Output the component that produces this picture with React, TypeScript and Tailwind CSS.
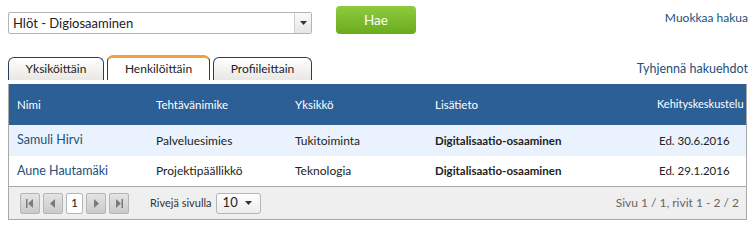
import React from "react";

const font = { fontFamily: 'Lato, "Liberation Sans", sans-serif' };

function TriDown() {
  return (
    <svg width="7" height="4" viewBox="0 0 7 4">
      <path d="M0 0h7L3.5 4z" fill="#333" />
    </svg>
  );
}

function PagerBtn({ children }: { children: React.ReactNode }) {
  return (
    <div className="w-[20px] h-[21px] flex items-center justify-center rounded-[2px] border border-[#b5b5b5] bg-gradient-to-b from-[#e4e4e4] to-[#c9c9c9]">
      {children}
    </div>
  );
}

const cols = "grid grid-cols-[139px_139px_140px_222px_1fr] items-center";

export default function App() {
  return (
    <div className="w-[755px] h-[228px] bg-white text-[#222]" style={font}>
      <div className="flex items-start pl-2 pr-[7px] pt-[6px] h-[50px]">
        <div className="mt-[6px] w-[304px] h-[22px] border border-[#b3b3b3] rounded-[2px] flex bg-white">
          <div className="flex-1 text-[13px] leading-[20px] pl-[4px]">Hlöt - Digiosaaminen</div>
          <div className="w-[17px] border-l border-[#cfcfcf] bg-gradient-to-b from-[#fafafa] to-[#e6e6e6] flex items-center justify-center">
            <TriDown />
          </div>
        </div>
        <div className="ml-[24px] w-[80px] h-[28px] rounded-[4px] bg-gradient-to-b from-[#8fca3e] to-[#6aac1c] text-white text-[13.5px] flex items-center justify-center">
          Hae
        </div>
        <div className="flex-1 text-right text-[12px] text-[#24507c] leading-[20px] pt-[2px]">Muokkaa hakua</div>
      </div>
      <div className="flex items-end pl-2 pr-[7px] h-[30px]">
        <div className="flex items-end gap-[3px]">
          <div className="w-[96px] h-[23px] border border-b-0 border-[#233f5e] rounded-t-[6px] bg-gradient-to-b from-white to-[#e9e7e2] text-[12px] flex items-center justify-center">Yksiköittäin</div>
          <div className="w-[103px] h-[25px] border border-b-0 border-[#233f5e] border-t-[3px] border-t-[#f0a23a] rounded-t-[6px] bg-white text-[12px] flex items-center justify-center">Henkilöittäin</div>
          <div className="w-[99px] h-[23px] border border-b-0 border-[#233f5e] rounded-t-[6px] bg-gradient-to-b from-white to-[#e9e7e2] text-[12px] flex items-center justify-center">Profiileittain</div>
        </div>
        <div className="flex-1 text-right text-[12.5px] text-[#24507c] leading-[18px] pb-[2px]">Tyhjennä hakuehdot</div>
      </div>
      <div className="mt-[4px] mx-2 border border-[#a9a9a9] border-t-0">
        <div className={cols + " h-[41px] bg-[#2c5f96] text-white text-[11.5px]"}>
          <div className="pl-2">Nimi</div>
          <div className="pl-2">Tehtävänimike</div>
          <div className="pl-2">Yksikkö</div>
          <div className="pl-2">Lisätieto</div>
          <div className="pl-2 text-[11px]">Kehityskeskustelu</div>
        </div>
        <div className={cols + " h-[31px] bg-[#eaf3fd] text-[12px]"}>
          <div className="pl-2 text-[#24507c] text-[12.5px]">Samuli Hirvi</div>
          <div className="pl-2">Palveluesimies</div>
          <div className="pl-2">Tukitoiminta</div>
          <div className="pl-2 font-bold text-[11.5px]">Digitalisaatio-osaaminen</div>
          <div className="pl-[10px] text-[11.5px]">Ed. 30.6.2016</div>
        </div>
        <div className={cols + " h-[30px] bg-white text-[12px]"}>
          <div className="pl-2 text-[#24507c] text-[12.5px]">Aune Hautamäki</div>
          <div className="pl-2">Projektipäällikkö</div>
          <div className="pl-2">Teknologia</div>
          <div className="pl-2 font-bold text-[11.5px]">Digitalisaatio-osaaminen</div>
          <div className="pl-[10px] text-[11.5px]">Ed. 29.1.2016</div>
        </div>
        <div className="h-[33px] border-t border-[#a9a9a9] bg-[#efefef] flex items-center pl-[11px] pr-[7px] text-[12px]">
          <div className="flex items-center gap-[3px]">
            <PagerBtn>
              <svg width="8" height="9" viewBox="0 0 8 9"><rect x="0" y="0" width="1.5" height="9" fill="#7a7a7a" /><path d="M7 0v9L2 4.5z" fill="#7a7a7a" /></svg>
            </PagerBtn>
            <PagerBtn>
              <svg width="6" height="9" viewBox="0 0 6 9"><path d="M5 0v9L0 4.5z" fill="#7a7a7a" /></svg>
            </PagerBtn>
            <div className="w-[17px] h-[21px] border border-[#b5b5b5] rounded-[2px] bg-white flex items-center justify-center text-[12px]">1</div>
            <PagerBtn>
              <svg width="6" height="9" viewBox="0 0 6 9"><path d="M1 0v9L6 4.5z" fill="#7a7a7a" /></svg>
            </PagerBtn>
            <PagerBtn>
              <svg width="8" height="9" viewBox="0 0 8 9"><path d="M1 0v9L6 4.5z" fill="#7a7a7a" /><rect x="6.5" y="0" width="1.5" height="9" fill="#7a7a7a" /></svg>
            </PagerBtn>
          </div>
          <div className="ml-[21px] text-[#333] text-[11px]">Rivejä sivulla</div>
          <div className="ml-[4px] w-[45px] h-[21px] border border-[#b5b5b5] rounded-[3px] bg-gradient-to-b from-white to-[#ececec] flex items-center justify-between pl-[6px] pr-[8px] text-[13px]">
            <span>10</span>
            <TriDown />
          </div>
          <div className="flex-1 text-right text-[#666]">Sivu 1 / 1, rivit 1 - 2 / 2</div>
        </div>
      </div>
    </div>
  );
}
